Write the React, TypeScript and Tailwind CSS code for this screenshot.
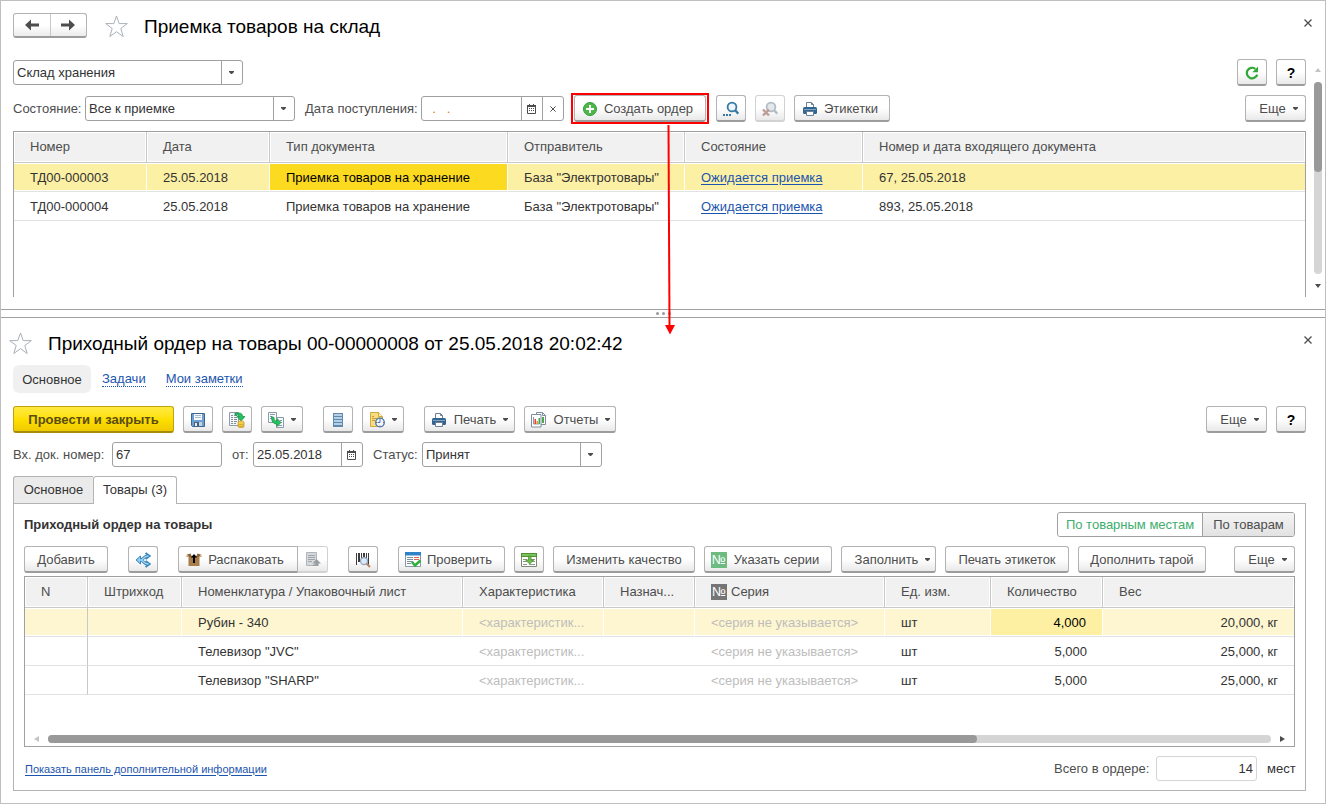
import type { ReactNode } from "react";
import clsx from "clsx";

function Caret() {
  return (
    <svg className="shrink-0" width="5" height="3" viewBox="0 0 5 3" fill="currentColor">
      <path d="M0 0h5v1L3 3H2L0 1z" />
    </svg>
  );
}

function ArrowIcon({ flip = false }: { flip?: boolean }) {
  return (
    <svg className={clsx(flip && "rotate-180")} width="14" height="12" viewBox="0 0 14 12" fill="#4d4d4d">
      <path d="M0 6L6 .5v4h8v3H6v4z" />
    </svg>
  );
}

function StarIcon() {
  return (
    <svg width="23" height="23" viewBox="0 0 23 23" fill="none" stroke="#a9b0b8" strokeWidth="1">
      <path d="M11.5 1l2.700 7.600h8.100l-6.500 4.900 2.400 8-6.700-4.800-6.700 4.800 2.400-8L.7 8.600h8.100z" />
    </svg>
  );
}

function CloseIcon({ size = 8 }: { size?: number }) {
  return (
    <svg width={size} height={size} viewBox="0 0 8 8" fill="none" stroke="#4d4d4d" strokeWidth="1.3">
      <path d="M.5.5l7 7M7.5.5l-7 7" />
    </svg>
  );
}

function CalendarIcon() {
  return (
    <svg width="9" height="10" viewBox="0 0 9 10" fill="none">
      <path d="M.5 1.5h8v8h-8z" stroke="#4d4d4d" />
      <path d="M0 1h9v2H0zM2 0h1v1H2zM6 0h1v1H6z" fill="#4d4d4d" />
      <path d="M2 4.5h5M2 6.5h5" stroke="#4d4d4d" strokeDasharray="1 1" />
    </svg>
  );
}

function RefreshIcon() {
  return (
    <svg width="14" height="14" viewBox="0 0 14 14" fill="none">
      <path d="M12.200 8.600A5.300 5.300 0 1 1 10.300 2.800" stroke="#2fa836" strokeWidth="2.200" />
      <path d="M13 .6v5.600H7.400z" fill="#2fa836" />
    </svg>
  );
}

function PlusIcon() {
  return (
    <svg width="14" height="14" viewBox="0 0 14 14">
      <circle cx="7" cy="7" r="6.5" fill="#4cb748" stroke="#2f9a3c" />
      <path d="M7 3v8M3 7h8" stroke="#fff" strokeWidth="2" />
    </svg>
  );
}

function SearchIcon() {
  return (
    <svg width="16" height="16" viewBox="0 0 16 16" fill="none">
      <circle cx="9" cy="6" r="4.400" fill="#eef6fb" stroke="#3579a4" strokeWidth="1.800" />
      <path d="M12 9l3.300 3.700" stroke="#3579a4" strokeWidth="2.400" />
      <path d="M0 13h2v2H0zM3 13h2v2H3zM6 13h2v2H6z" fill="#3579a4" />
    </svg>
  );
}

function SearchOffIcon() {
  return (
    <svg width="16" height="16" viewBox="0 0 16 16" fill="none">
      <circle cx="9" cy="6" r="4.400" fill="#e3e8ec" stroke="#b3bcc4" strokeWidth="1.800" />
      <path d="M12 9l3.300 3.700" stroke="#b3bcc4" strokeWidth="2.400" />
      <path d="M1 8.500l6 6M7 8.500l-6 6" stroke="#bb9d96" strokeWidth="2.400" />
    </svg>
  );
}

function PrinterIcon() {
  return (
    <svg width="16" height="16" viewBox="0 0 16 16">
      <path d="M4.500 7V1.500h5l2 2V7" fill="#fff" stroke="#6d8092" />
      <path d="M9.500 1.500v2h2" fill="none" stroke="#6d8092" />
      <rect x="1" y="6" width="14" height="7" rx="1.500" fill="#33648f" />
      <path d="M2 8h12v1H2z" fill="#7fa6c6" />
      <path d="M4.500 10.500h7v4h-7z" fill="#fff" stroke="#6d8092" />
    </svg>
  );
}

function SaveIcon() {
  return (
    <svg width="16" height="16" viewBox="0 0 16 16">
      <path d="M1.500 1.500h13v13h-12l-1-1z" fill="#6d9fd3" stroke="#3e6691" />
      <path d="M4 2h8v6H4z" fill="#f4f8fc" />
      <path d="M5 3.500h6M5 5.500h6" stroke="#a9bccf" />
      <path d="M4 10h8v4H4z" fill="#44617e" />
      <path d="M5 11h2v3H5z" fill="#e8eef4" />
      <path d="M9 10h3v4H9z" fill="#c3d2e0" />
    </svg>
  );
}

function PostIcon() {
  return (
    <svg width="16" height="16" viewBox="0 0 16 16">
      <path d="M.5.5h9v13h-9z" fill="#f7f9fb" stroke="#8b9bab" />
      <path d="M2 3.500h2M5 3.500h3M2 5.500h2M5 5.500h3M2 7.500h2M5 7.500h3M2 9.500h2M5 9.500h3M2 11.500h2M5 11.500h2" stroke="#7b8e9f" />
      <path d="M6 1h4c2.500 0 3.500 1.500 3.500 3.500H16L12 9 8 4.500h2.500C10.500 3.500 9.500 3 8 3H6z" fill="#26c160" stroke="#128a41" strokeWidth=".7" />
      <path d="M9 10c0-1.500 6-1.500 6 0v4.500c0 1.500-6 1.500-6 0z" fill="#f2cc4e" stroke="#c39a21" strokeWidth=".7" />
      <path d="M9 12c1.500 1 4.500 1 6 0M9 14c1.500 1 4.500 1 6 0" fill="none" stroke="#c39a21" strokeWidth=".7" />
    </svg>
  );
}

function CreateFromIcon() {
  return (
    <svg width="16" height="16" viewBox="0 0 16 16">
      <path d="M.5.5h8v10h-8z" fill="#f7f9fb" stroke="#8b9bab" />
      <path d="M2 2.500h5M2 4.500h2M2 6.500h2" stroke="#8b9bab" />
      <path d="M8.500 5.500h7v10h-7z" fill="#f7f9fb" stroke="#8b9bab" />
      <path d="M12 8.500h2M12 10.500h2M10 13.500h4" stroke="#8b9bab" />
      <path d="M3.500 4.500L6 5.500c0 3 1 3.500 3 3.500V6.500l4 4-4 4V12C5 12 3.500 9.500 3.500 4.500z" fill="#26c160" stroke="#128a41" strokeWidth=".7" />
    </svg>
  );
}

function RegistryIcon() {
  return (
    <svg width="16" height="16" viewBox="0 0 16 16">
      <path d="M3 1h10v14H3z" fill="#6189ad" />
      <path d="M4 2h8v2H4zM4 5h8v2H4zM4 8h8v2H4zM4 11h8v2H4z" fill="#b4cfe6" />
    </svg>
  );
}

function ScheduleIcon() {
  return (
    <svg width="16" height="16" viewBox="0 0 16 16">
      <path d="M1.500.5h8l4 4v10h-12z" fill="#f8dc80" stroke="#d3a93f" />
      <path d="M9.500.5v4h4" fill="#fdf0be" stroke="#d3a93f" />
      <path d="M3 4.500h2M3 6.500h5M3 8.500h3" stroke="#c99c33" />
      <circle cx="11" cy="10.500" r="4.300" fill="#eef6ff" stroke="#3f79b5" strokeWidth="1.300" />
      <path d="M11 7.500v3H8.500" fill="none" stroke="#3f79b5" />
      <path d="M10.500 6.500h1v1h-1zM10.500 13.500h1v1h-1zM7 10h1v1H7zM14 10h1v1h-1z" fill="#d9453c" />
    </svg>
  );
}

function ReportsIcon() {
  return (
    <svg width="17" height="16" viewBox="0 0 17 16">
      <path d="M6.500.5h6l3 3v9h-9z" fill="#fff" stroke="#7d8f9f" />
      <path d="M12.500.5v3h3" fill="none" stroke="#7d8f9f" />
      <path d="M12 5h2v6h-2z" fill="#4da84d" />
      <path d="M1.500 2.500h9.500v12.500H1.500z" fill="#fff" stroke="#7d8f9f" />
      <path d="M3.500 5v7h6" fill="none" stroke="#8d9dac" />
      <path d="M4.500 7h1.500v5H4.500z" fill="#e2413c" />
      <path d="M6.500 9H8v3H6.500z" fill="#f0903a" />
      <path d="M8.500 6H10v6H8.500z" fill="#4da84d" />
    </svg>
  );
}

function SplitIcon() {
  return (
    <svg width="16" height="16" viewBox="0 0 16 16" fill="none">
      <path d="M3 8h3C8.500 7.500 8.500 4 13 4M6 8c2.500.5 2.500 4 7 4" stroke="#3d86ba" strokeWidth="3" />
      <path d="M10.500 1l4 3-4 3M10.500 9l4 3-4 3" stroke="#3d86ba" strokeWidth="2" />
      <path d="M5.500 4L1 8l4.500 4z" fill="#8ccbee" stroke="#3d86ba" />
      <path d="M4 8h2C8.500 7.500 8.500 4 13.500 4M6 8c2.500.5 2.500 4 7.500 4" stroke="#9fd5f3" strokeWidth="1.400" />
    </svg>
  );
}

function UnpackIcon() {
  return (
    <svg width="16" height="16" viewBox="0 0 16 16">
      <path d="M2.500 4h11v10h-11z" fill="#a87d4c" />
      <path d="M3 5L1 2.500l3.500-1L6 5zM13 5l2-2.500-3.500-1L10 5z" fill="#8a6437" />
      <path d="M1 2.500L0 4.500l3 1zM15 2.500l1 2-3 1z" fill="#c9a36f" />
      <path d="M8 2l3.200 3.500H9V11H7V5.500H4.800z" fill="#000" />
    </svg>
  );
}

function SheetUpIcon() {
  return (
    <svg width="16" height="16" viewBox="0 0 16 16">
      <path d="M1.500.5h10v13h-10z" fill="#d5d9dc" stroke="#b0b5b9" />
      <path d="M3 3.500h7M3 5.500h7M3 7.500h7M3 9.500h4" stroke="#9fa5aa" />
      <path d="M11.500 7l4.500 4.500h-2.500V14H8v-1.500h2.500v-1H7.500z" fill="#979da1" />
    </svg>
  );
}

function BarcodeIcon() {
  return (
    <svg width="16" height="16" viewBox="0 0 16 16">
      <path d="M1 1h1v12H1zM3 1h2v9H3zM6 1h1v9H6zM8 1h2v9H8zM11 1h1v9h-1zM13 1h1v12h-1z" fill="#3c3c3c" />
      <circle cx="9" cy="9" r="3.500" fill="#dbeafa" stroke="#93a8c4" strokeWidth="1.300" />
      <path d="M11.500 11.500L15 15" stroke="#b98560" strokeWidth="2" />
    </svg>
  );
}

function CheckListIcon() {
  return (
    <svg width="16" height="16" viewBox="0 0 16 16">
      <path d="M.5.5h15v14H.5z" fill="#fff" stroke="#8798a8" />
      <path d="M0 0h16v3.500H0z" fill="#2d83c6" />
      <path d="M2 5.500h6M2 7.500h6M2 9.500h6M2 11.500h4" stroke="#7e8f9e" />
      <path d="M9 5.500h5M9 7.500h5" stroke="#e0604c" />
      <path d="M7 10l3 3.500 5.500-5" fill="none" stroke="#2fae3a" strokeWidth="2.600" />
    </svg>
  );
}

function FillTableIcon() {
  return (
    <svg width="16" height="14" viewBox="0 0 16 14">
      <path d="M.5.5h15v13H.5z" fill="#fff" stroke="#7d8870" />
      <path d="M0 0h16v4H0z" fill="#4d9133" />
      <path d="M1 1h14v2H1z" fill="#7cc35c" />
      <path d="M2 6.500h4M10 6.500h4M2 8.500h4M11 8.500h3M2 11.500h4M8 11.500h6" stroke="#8d968b" />
      <path d="M7.500 3H10v4h2.700l-4 4-4-4h2.800z" fill="#6cc04a" stroke="#3f8b26" strokeWidth=".7" />
    </svg>
  );
}

function SeriesMark({ className }: { className: string }) {
  return (
    <span className={clsx("inline-flex h-4 w-4 shrink-0 items-center justify-center text-[13px] leading-4 text-white", className)}>
      №
    </span>
  );
}

interface ButtonProps {
  children: ReactNode;
  label?: string;
  className?: string;
  disabled?: boolean;
}

function Button({ children, label, className, disabled }: ButtonProps) {
  return (
    <button
      type="button"
      aria-label={label}
      disabled={disabled}
      className={clsx(
        "flex h-[27px] shrink-0 items-center justify-center whitespace-nowrap rounded-[3px] border border-b-2 bg-linear-to-b from-white from-50% to-[#e9e9e9] pt-px text-[#4d4d4d]",
        disabled ? "border-[#d2d2d2]" : "border-[#b3b3b3] border-b-[#9c9c9c]",
        className,
      )}
    >
      {children}
    </button>
  );
}

function MoreButton() {
  return (
    <Button className="w-[61px] gap-[7px] pl-1.5">
      Еще
      <Caret />
    </Button>
  );
}

function Dropdown({ id, label, value, className }: { id: string; label?: string; value: string; className: string }) {
  return (
    <div className={clsx("flex h-[25px] shrink-0 rounded-[3px] border border-[#a0a0a0] bg-white", className)}>
      <select id={id} aria-label={label} className="min-w-0 flex-1 appearance-none pl-[3px] text-[#333] outline-none">
        <option>{value}</option>
      </select>
      <span className="flex w-[21px] items-center justify-center border-l border-[#a0a0a0] pr-px text-[#4d4d4d]">
        <Caret />
      </span>
    </div>
  );
}

function DateField({ id, value, className, clearable }: { id: string; value: string; className: string; clearable?: boolean }) {
  return (
    <div className={clsx("flex h-[25px] shrink-0 rounded-[3px] border border-[#a0a0a0] bg-white", className)}>
      <input
        id={id}
        defaultValue={value}
        className={clsx("min-w-0 flex-1 pl-[3px] outline-none", clearable ? "text-[#d97a1c]" : "text-[#333]")}
      />
      <button type="button" aria-label="Выбрать дату" className="flex w-[21px] items-center justify-center border-l border-[#a0a0a0] pr-px">
        <CalendarIcon />
      </button>
      {clearable && (
        <button type="button" aria-label="Очистить" className="flex w-[21px] items-center justify-center border-l border-[#a0a0a0]">
          <CloseIcon size={6} />
        </button>
      )}
    </div>
  );
}

const documents = [
  { number: "ТД00-000003", date: "25.05.2018", type: "Приемка товаров на хранение", sender: 'База "Электротовары"', state: "Ожидается приемка", incoming: "67, 25.05.2018" },
  { number: "ТД00-000004", date: "25.05.2018", type: "Приемка товаров на хранение", sender: 'База "Электротовары"', state: "Ожидается приемка", incoming: "893, 25.05.2018" },
];

const goods = [
  { name: "Рубин - 340", unit: "шт", amount: "4,000", weight: "20,000, кг" },
  { name: 'Телевизор "JVC"', unit: "шт", amount: "5,000", weight: "25,000, кг" },
  { name: 'Телевизор "SHARP"', unit: "шт", amount: "5,000", weight: "25,000, кг" },
];

const th =
  "h-[31px] truncate border-r border-b border-[#c8c8c8] bg-[#f1f1f1] px-4 text-left font-normal text-[#4d4d4d] shadow-[inset_0_0_0_1px_#fff] last:border-r-0";
const td = "h-[29px] truncate border-b border-[#e2e2e2] px-4 pt-0.5 text-[#333]";
const tdActive = "border-r border-r-white shadow-[inset_0_1px_0_#fff,inset_0_-1px_0_#fff] last:border-r-0";

function DocumentsTable() {
  return (
    <div className="mt-[9px] min-h-[166px] border border-b-0 border-[#a0a0a0]">
      <table className="w-full table-fixed border-separate border-spacing-0">
        <colgroup>
          <col className="w-[133px]" />
          <col className="w-[123px]" />
          <col className="w-[238px]" />
          <col className="w-[177px]" />
          <col className="w-[178px]" />
          <col />
        </colgroup>
        <thead>
          <tr>
            <th className={th}>Номер</th>
            <th className={th}>Дата</th>
            <th className={th}>Тип документа</th>
            <th className={th}>Отправитель</th>
            <th className={th}>Состояние</th>
            <th className={th}>Номер и дата входящего документа</th>
          </tr>
        </thead>
        <tbody>
          {documents.map((doc, i) => {
            const cell = clsx(td, i === 0 && tdActive);
            const fill = i === 0 && "bg-[#fcf0a4]";
            return (
              <tr key={doc.number}>
                <td className={clsx(cell, fill)}>{doc.number}</td>
                <td className={clsx(cell, fill)}>{doc.date}</td>
                <td className={clsx(cell, i === 0 && "bg-[#fcda20] text-black")}>{doc.type}</td>
                <td className={clsx(cell, fill)}>{doc.sender}</td>
                <td className={clsx(cell, fill)}>
                  <a href="#" className="text-[#1c55ae] underline underline-offset-2">{doc.state}</a>
                </td>
                <td className={clsx(cell, fill)}>{doc.incoming}</td>
              </tr>
            );
          })}
        </tbody>
      </table>
    </div>
  );
}

function GoodsTable() {
  return (
    <div className="mt-[3px] border border-[#a0a0a0]">
      <table className="w-full table-fixed border-separate border-spacing-0">
        <colgroup>
          <col className="w-[63px]" />
          <col className="w-[94px]" />
          <col className="w-[281px]" />
          <col className="w-[141px]" />
          <col className="w-[91px]" />
          <col className="w-[190px]" />
          <col className="w-[106px]" />
          <col className="w-[112px]" />
          <col />
        </colgroup>
        <thead>
          <tr>
            <th className={th}>N</th>
            <th className={th}>Штрихкод</th>
            <th className={th}>Номенклатура / Упаковочный лист</th>
            <th className={th}>Характеристика</th>
            <th className={th}>Назнач...</th>
            <th className={th}>
              <span className="flex items-center gap-1">
                <SeriesMark className="bg-[#757575]" />
                Серия
              </span>
            </th>
            <th className={th}>Ед. изм.</th>
            <th className={th}>Количество</th>
            <th className={th}>Вес</th>
          </tr>
        </thead>
        <tbody>
          {goods.map((item, i) => {
            const cell = clsx(td, i === 0 && tdActive);
            const fill = i === 0 && "bg-[#fdf6d0]";
            return (
              <tr key={item.name}>
                <td className={clsx(td, fill, "border-r border-r-[#c8c8c8]", i === 0 && "shadow-[inset_0_1px_0_#fff,inset_0_-1px_0_#fff]")} />
                <td className={clsx(cell, fill)} />
                <td className={clsx(cell, fill)}>{item.name}</td>
                <td className={clsx(cell, fill)}>
                  <span className="text-[#bdbdbd]">&lt;характеристик...</span>
                </td>
                <td className={clsx(cell, fill)} />
                <td className={clsx(cell, fill)}>
                  <span className="text-[#bdbdbd]">&lt;серия не указывается&gt;</span>
                </td>
                <td className={clsx(cell, fill)}>{item.unit}</td>
                <td className={clsx(cell, "text-right", i === 0 && "bg-[#fdf0a3] text-black")}>{item.amount}</td>
                <td className={clsx(cell, fill, "text-right")}>{item.weight}</td>
              </tr>
            );
          })}
        </tbody>
      </table>

      <div className="mt-10 flex items-center pr-[9px] pb-[3px] pl-[9px]">
        <svg width="5" height="6" viewBox="0 0 5 6" fill="#c4c4c4">
          <path d="M5 0v6L0 3z" />
        </svg>
        <div className="mx-[9px] h-2 flex-1 rounded-full bg-[#d5d5d5]">
          <div className="h-2 w-[76%] rounded-full bg-[#999]" />
        </div>
        <svg width="5" height="6" viewBox="0 0 5 6" fill="#4d4d4d">
          <path d="M0 0v6l5-3z" />
        </svg>
      </div>
    </div>
  );
}

function ReceivingPane() {
  return (
    <section>
      <header className="flex h-[37px] items-end pr-[13px] pl-3">
        <div className="flex h-[25px] w-[74px] rounded-[3px] border border-b-2 border-[#b3b3b3] border-b-[#9c9c9c] bg-linear-to-b from-white from-50% to-[#ececec]">
          <button type="button" aria-label="Назад" className="flex flex-1 items-center justify-center border-r border-[#c8c8c8]">
            <ArrowIcon />
          </button>
          <button type="button" aria-label="Вперед" className="flex flex-1 items-center justify-center">
            <ArrowIcon flip />
          </button>
        </div>
        <button type="button" aria-label="В избранное" className="ml-[18px]">
          <StarIcon />
        </button>
        <h1 className="ml-4 text-[19px] leading-[22px] text-black">Приемка товаров на склад</h1>
        <button type="button" aria-label="Закрыть" className="mb-[11px] ml-auto">
          <CloseIcon />
        </button>
      </header>

      <div className="mt-[21px] flex pr-[3px] pl-3">
        <div className="min-w-0 flex-1">
          <div className="flex items-center">
            <Dropdown id="warehouse" label="Склад" value="Склад хранения" className="w-[230px]" />
            <Button label="Обновить" className="ml-auto w-[30px]">
              <RefreshIcon />
            </Button>
            <Button label="Справка" className="ml-[9px] w-[30px] text-sm font-bold text-black">?</Button>
          </div>

          <div className="mt-[9px] flex h-[27px] items-center whitespace-nowrap">
            <label htmlFor="state" className="w-[72px] shrink-0">Состояние:</label>
            <Dropdown id="state" value="Все к приемке" className="w-[210px]" />
            <label htmlFor="arrival" className="ml-2.5 w-[116px] shrink-0">Дата поступления:</label>
            <DateField id="arrival" value="  .   ." clearable className="w-[143px]" />
            <div className="relative ml-[7px] w-[138px] shrink-0 border-2 border-[#f00] px-px">
              <Button className="h-[25px] w-full gap-[7px] pr-1">
                <PlusIcon />
                Создать ордер
              </Button>
              <svg className="absolute top-full left-[92px] z-10" width="10" height="214" viewBox="0 0 10 214">
                <path d="M3.500 3L4.500 204" stroke="#f00" strokeWidth="2" />
                <path d="M0 203h10l-5 9.500z" fill="#f00" />
              </svg>
            </div>
            <Button label="Найти" className="ml-[7px] w-[30px]">
              <SearchIcon />
            </Button>
            <Button label="Отменить поиск" disabled className="ml-[9px] w-[30px]">
              <SearchOffIcon />
            </Button>
            <Button className="ml-[9px] w-[96px] gap-1.5 pr-1">
              <PrinterIcon />
              Этикетки
            </Button>
            <div className="ml-auto">
              <MoreButton />
            </div>
          </div>

          <DocumentsTable />
        </div>

        <div className="ml-2 flex w-2 flex-col items-center py-[9px]">
          <svg width="6" height="4" viewBox="0 0 6 4" fill="#c4c4c4">
            <path d="M3 0l3 4H0z" />
          </svg>
          <div className="my-2.5 w-2 flex-1 rounded-full bg-[#d5d5d5]">
            <div className="h-[47%] w-2 rounded-full bg-[#999]" />
          </div>
          <svg width="6" height="4" viewBox="0 0 6 4" fill="#4d4d4d">
            <path d="M0 0h6L3 4z" />
          </svg>
        </div>
      </div>
    </section>
  );
}

function OrderPane() {
  return (
    <section className="pt-3 pr-[19px] pb-3 pl-3">
      <header className="flex h-[26px] items-center">
        <button type="button" aria-label="В избранное" className="-ml-1">
          <StarIcon />
        </button>
        <h2 className="ml-4 pt-0.5 text-[19px] leading-6 text-black">Приходный ордер на товары 00-00000008 от 25.05.2018 20:02:42</h2>
        <button type="button" aria-label="Закрыть" className="-mr-1.5 mb-[7px] ml-auto">
          <CloseIcon />
        </button>
      </header>

      <nav className="mt-[9px] flex h-7 items-center pt-px">
        <a href="#" className="-mt-px flex h-7 w-[78px] items-center justify-center rounded-md bg-[#f0f0f0] pt-0.5 text-[#333]">Основное</a>
        <a href="#" className="ml-[11px] border-b border-dotted border-[#1c55ae] leading-[14px] text-[#1c55ae]">Задачи</a>
        <a href="#" className="ml-5 border-b border-dotted border-[#1c55ae] leading-[14px] text-[#1c55ae]">Мои заметки</a>
      </nav>

      <div className="mt-[13px] flex">
        <button
          type="button"
          className="h-[27px] w-[161px] shrink-0 rounded-[3px] border border-b-2 border-[#c0a312] border-b-[#a68c0c] bg-linear-to-b from-[#ffea3c] via-[#ffe000] to-[#efc900] pt-px font-bold text-[#5a4b12]"
        >
          Провести и закрыть
        </button>
        <Button label="Записать" className="ml-[9px] w-[30px]">
          <SaveIcon />
        </Button>
        <Button label="Провести" className="ml-[9px] w-[30px]">
          <PostIcon />
        </Button>
        <Button label="Создать на основании" className="ml-[9px] w-[42px] gap-[7px]">
          <CreateFromIcon />
          <Caret />
        </Button>
        <Button label="Движения" className="ml-5 w-[30px]">
          <RegistryIcon />
        </Button>
        <Button label="Напоминания" className="ml-[9px] w-[42px] gap-[7px]">
          <ScheduleIcon />
          <Caret />
        </Button>
        <Button className="ml-5 w-[91px] gap-[7px]">
          <PrinterIcon />
          Печать
          <Caret />
        </Button>
        <Button className="ml-[9px] w-[92px] gap-[7px]">
          <ReportsIcon />
          Отчеты
          <Caret />
        </Button>
        <div className="ml-auto flex gap-[9px]">
          <MoreButton />
          <Button label="Справка" className="w-[30px] text-sm font-bold text-black">?</Button>
        </div>
      </div>

      <div className="mt-[9px] flex items-center whitespace-nowrap">
        <label htmlFor="incoming" className="w-[99px] shrink-0">Вх. док. номер:</label>
        <input id="incoming" defaultValue="67" className="h-[25px] w-[110px] rounded-[3px] border border-[#a0a0a0] pl-[3px] text-[#333] outline-none" />
        <label htmlFor="incoming-date" className="ml-2.5 w-[21px] shrink-0">от:</label>
        <DateField id="incoming-date" value="25.05.2018" className="w-[110px]" />
        <label htmlFor="status" className="ml-2.5 w-[49px] shrink-0">Статус:</label>
        <Dropdown id="status" value="Принят" className="w-[180px]" />
      </div>

      <div role="tablist" className="mt-[9px] flex">
        <button type="button" role="tab" aria-selected="false" className="h-[27px] w-20 rounded-tl-[3px] border border-r-0 border-b-0 border-[#b3b3b3] bg-[#ebebeb] text-[#333]">
          Основное
        </button>
        <button type="button" role="tab" aria-selected="true" className="relative z-10 -mb-px w-[84px] rounded-t-[3px] border border-b-0 border-[#b3b3b3] bg-white pb-0.5 text-[#333]">
          Товары (3)
        </button>
      </div>

      <div className="border border-[#b3b3b3] px-2.5 pt-2 pb-[9px]">
        <div className="flex items-center justify-between">
          <h3 className="font-bold text-[#333]">Приходный ордер на товары</h3>
          <div className="flex h-[25px] w-[238px] rounded-[3px] border border-[#a0a0a0] whitespace-nowrap">
            <button type="button" aria-pressed="true" className="w-[144px] shrink-0 rounded-l-[3px] bg-white text-[#3dae6d]">По товарным местам</button>
            <button type="button" aria-pressed="false" className="flex-1 rounded-r-[2px] border-l border-[#a0a0a0] bg-linear-to-b from-[#f4f4f4] to-[#e2e2e2]">
              По товарам
            </button>
          </div>
        </div>

        <div className="mt-[9px] flex">
          <Button className="w-[84px]">Добавить</Button>
          <Button label="Разбить строку" className="ml-5 w-[30px]">
            <SplitIcon />
          </Button>
          <Button className="ml-5 w-[120px] gap-1.5 rounded-r-none pr-1.5">
            <UnpackIcon />
            Распаковать
          </Button>
          <Button label="Упаковочный лист" disabled className="w-[30px] rounded-l-none border-l-0">
            <SheetUpIcon />
          </Button>
          <Button label="Поиск по штрихкоду" className="ml-5 w-[30px]">
            <BarcodeIcon />
          </Button>
          <Button className="ml-5 w-[107px] gap-1.5 pr-1.5">
            <CheckListIcon />
            Проверить
          </Button>
          <Button label="Загрузить" className="ml-[9px] w-[30px]">
            <FillTableIcon />
          </Button>
          <Button className="ml-[9px] w-[142px]">Изменить качество</Button>
          <Button className="ml-[9px] w-[128px] gap-[7px] pr-1.5">
            <SeriesMark className="bg-[#6cbc82]" />
            Указать серии
          </Button>
          <Button className="ml-[9px] w-[95px] gap-[7px] pl-2">
            Заполнить
            <Caret />
          </Button>
          <Button className="ml-[9px] w-[124px]">Печать этикеток</Button>
          <Button className="ml-[9px] w-[128px]">Дополнить тарой</Button>
          <div className="ml-auto">
            <MoreButton />
          </div>
        </div>

        <GoodsTable />

        <div className="mt-[9px] flex items-center">
          <a href="#" className="ml-px text-[11px] text-[#1c55ae] underline underline-offset-2">Показать панель дополнительной информации</a>
          <label htmlFor="total" className="ml-auto w-[102px] whitespace-nowrap">Всего в ордере:</label>
          <input id="total" defaultValue="14" className="h-[25px] w-[101px] rounded-[3px] border border-[#d5d5d5] pr-[3px] text-right text-[#333] outline-none" />
          <span className="w-[38px] pl-2.5 text-[#333]">мест</span>
        </div>
      </div>
    </section>
  );
}

export default function App() {
  return (
    <main className="border border-[#bfbfbf] bg-white font-['Liberation_Sans',Arial,sans-serif] text-[13px] leading-4 text-[#4d4d4d]">
      <ReceivingPane />
      <div className="mt-3 flex h-[9px] items-center justify-center gap-[3px] border-y border-[#a0a0a0]">
        <span className="h-[3px] w-[3px] rounded-full bg-[#999]" />
        <span className="h-[3px] w-[3px] rounded-full bg-[#999]" />
        <span className="h-[3px] w-[3px] rounded-full bg-[#999]" />
      </div>
      <OrderPane />
    </main>
  );
}
